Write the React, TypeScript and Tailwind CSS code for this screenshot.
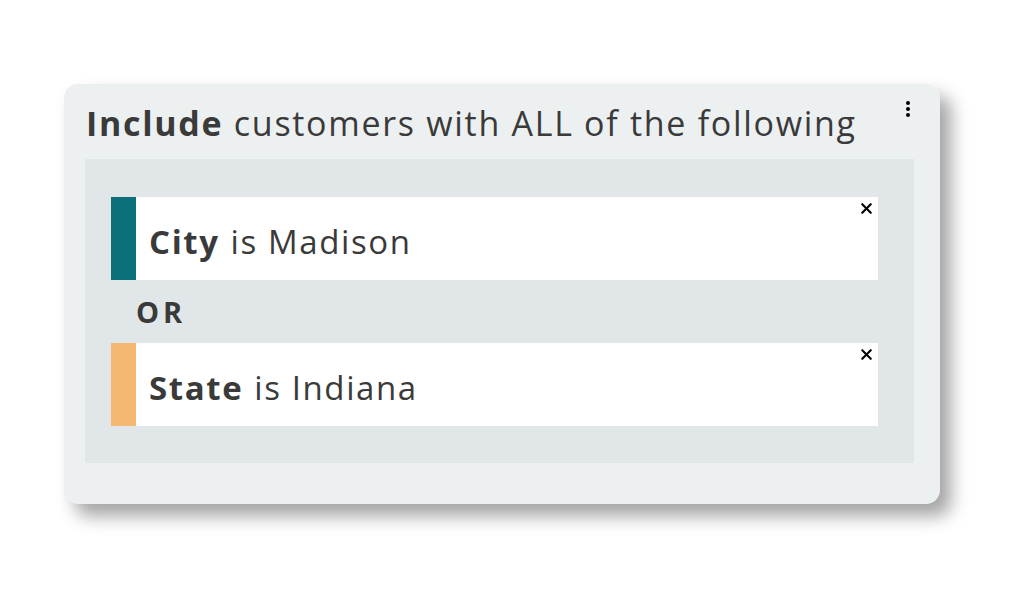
import { X } from 'lucide-react';

interface RuleProps {
  field: string;
  value: string;
  color: string;
}

function Rule({ field, value, color }: RuleProps) {
  return (
    <div className="relative flex h-[83px] bg-white">
      <div className={`w-[25px] shrink-0 ${color}`} />
      <div className="flex items-center pl-[13px] pt-[7px] text-[33px] tracking-[1.6px] text-[#3a3a3a]">
        <span className="font-bold">{field}</span>
        <span className="ml-[11px]">is {value}</span>
      </div>
      <button className="absolute right-[3px] top-[3px] text-black">
        <X className="h-[17px] w-[17px]" strokeWidth={3} />
      </button>
    </div>
  );
}

export default function App() {
  return (
    <div
      className="h-[589px] w-[1026px] bg-white pl-[64px] pt-[84px]"
      style={{ fontFamily: '"Open Sans", "Liberation Sans", sans-serif' }}
    >
      <div className="relative h-[420px] w-[876px] rounded-[14px] bg-[#edf0f1] shadow-[11px_12px_18px_rgba(0,0,0,0.36)]">
        <div className="pl-[22px] pt-[14px] text-[34px] leading-[50px] tracking-[1.7px] text-[#3a3a3a]">
          <span className="font-bold">Include</span> customers with ALL of the following
        </div>
        <div className="absolute right-[30px] top-[17px] flex flex-col gap-[2px]">
          <span className="h-[4px] w-[4px] rounded-full bg-black" />
          <span className="h-[4px] w-[4px] rounded-full bg-black" />
          <span className="h-[4px] w-[4px] rounded-full bg-black" />
        </div>
        <div className="ml-[21px] mt-[11px] w-[829px] bg-[#e1e6e8] pb-[37px] pl-[26px] pr-[36px] pt-[38px]">
          <Rule field="City" value="Madison" color="bg-[#0b707a]" />
          <div className="flex h-[63px] items-center pl-[25px] text-[29px] font-bold tracking-[4px] text-[#3a3a3a]">OR</div>
          <Rule field="State" value="Indiana" color="bg-[#f5b870]" />
        </div>
      </div>
    </div>
  );
}
